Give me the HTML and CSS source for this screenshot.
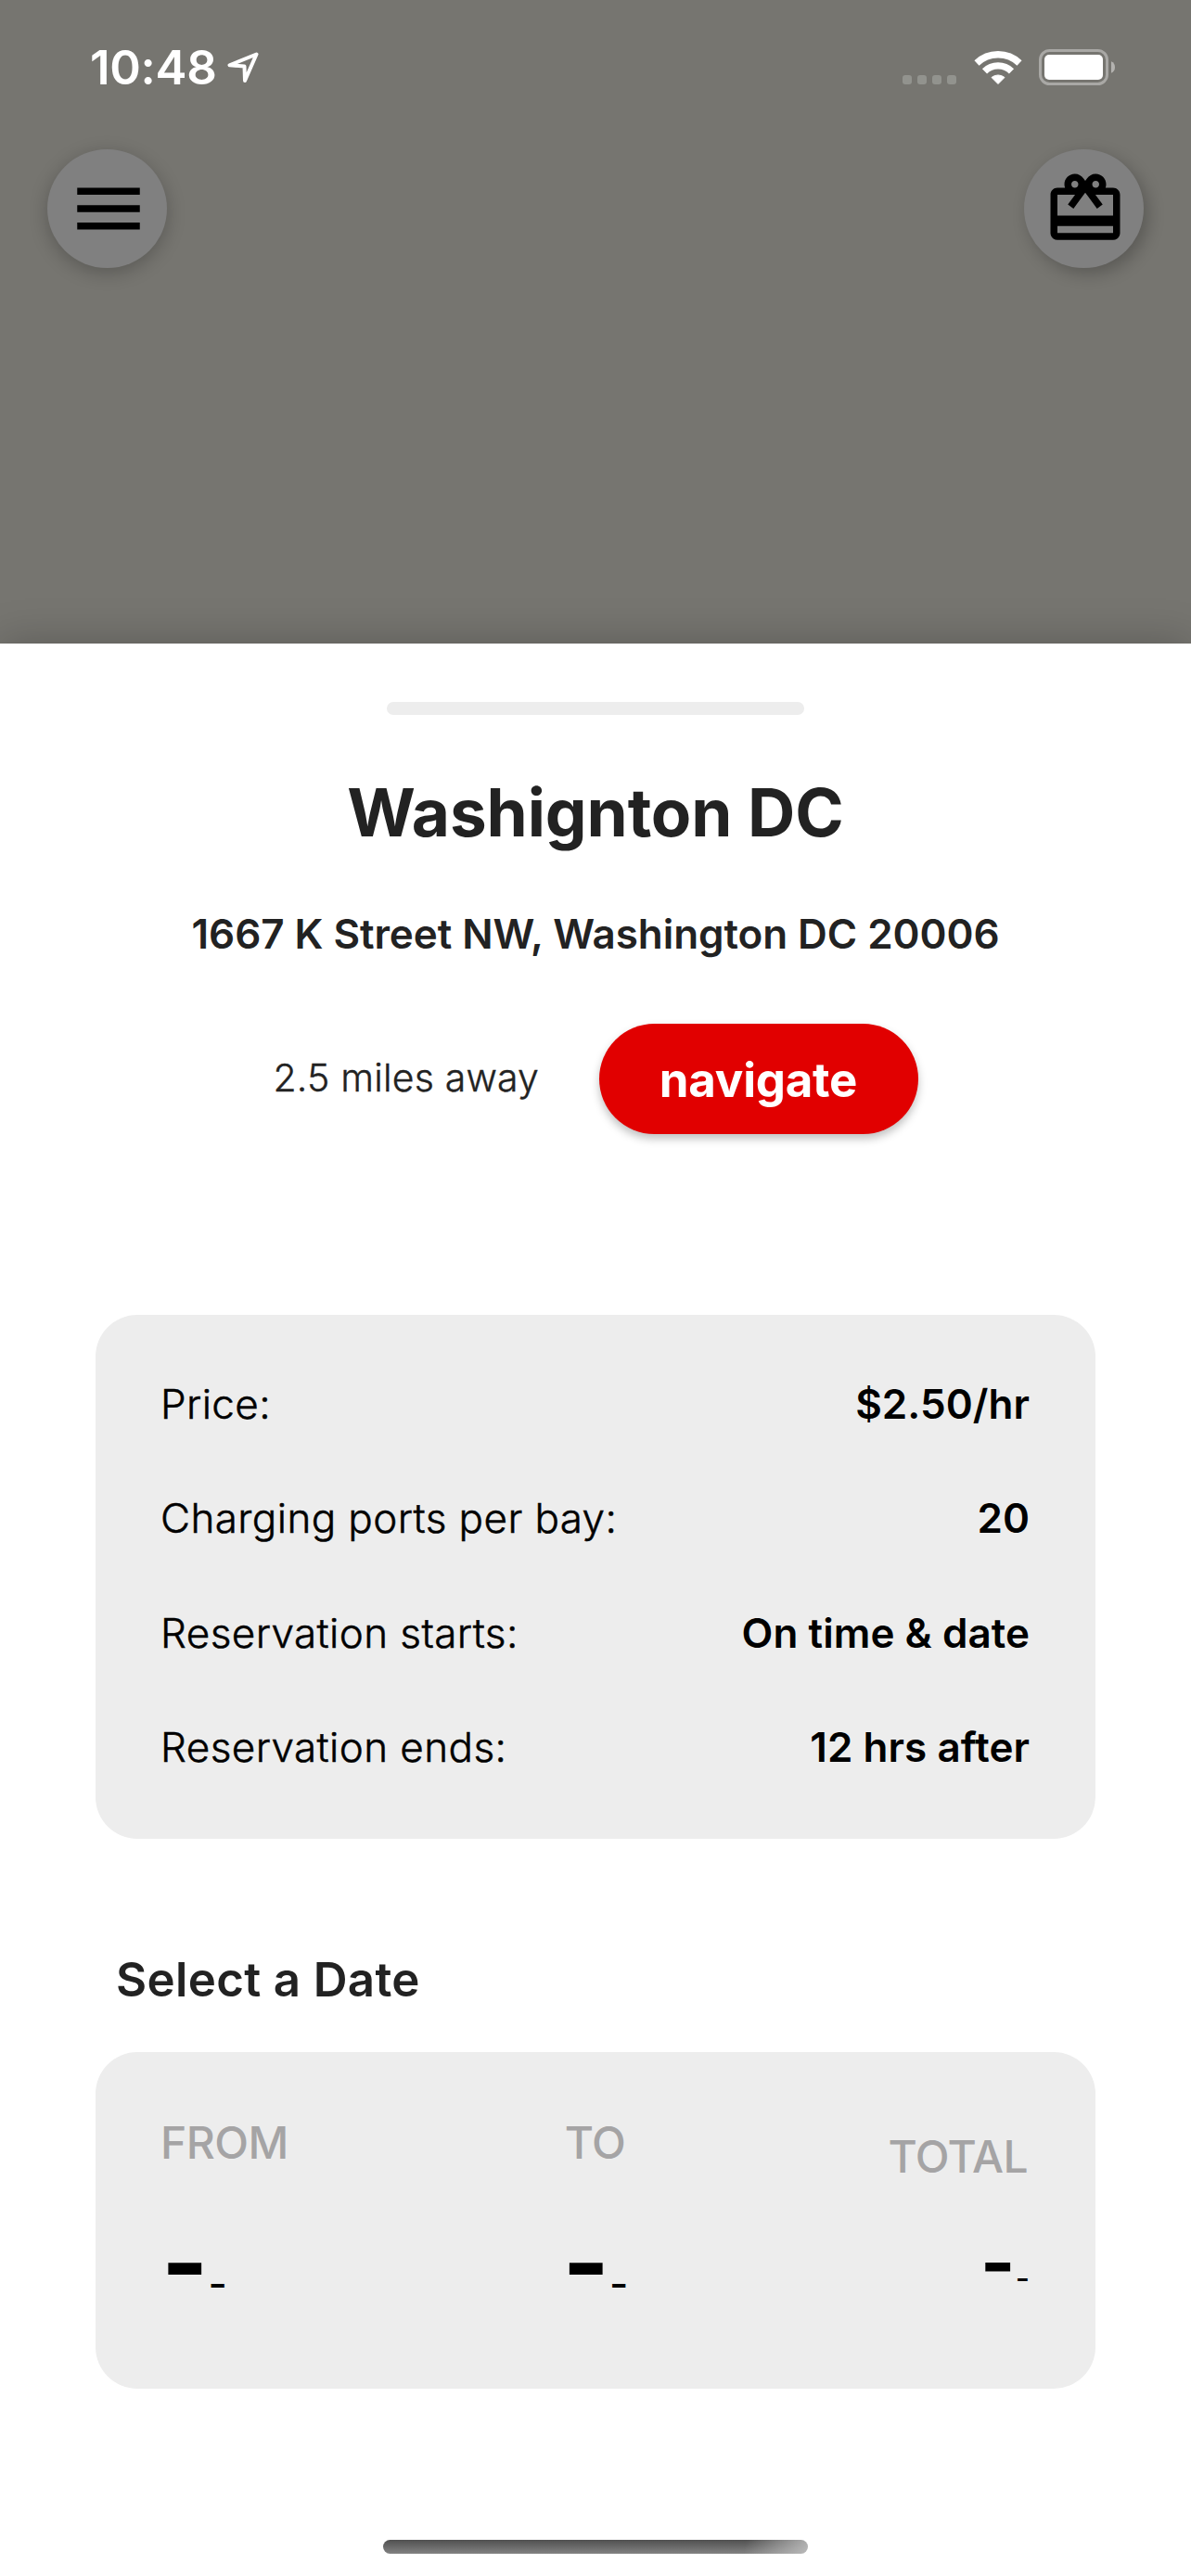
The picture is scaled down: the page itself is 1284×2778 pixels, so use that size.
FILE: index.html
```html
<!DOCTYPE html>
<html lang="en">
<head>
<meta charset="utf-8">
<title>Charging station</title>
<link rel="stylesheet" href="styles.css">
</head>
<body>
<main class="screen">
  <header class="map">
    <div class="status">
      <div class="status-left">
        <span class="clock">10:48</span>
        <svg class="location" viewBox="0 0 36 36" aria-hidden="true"><path d="M32.5 3.5 3.5 15.3 19.5 16.5 20 32Z" fill="none" stroke="#fff" stroke-width="4" stroke-linejoin="round"/></svg>
      </div>
      <div class="status-right">
        <div class="signal"><i></i><i></i><i></i><i></i></div>
        <svg class="wifi" viewBox="0 0 52 38" aria-hidden="true">
          <g fill="none" stroke="#fff" stroke-width="7.4"><path d="M3 14A33.3 33.3 0 0 1 49 14"/><path d="M11.5 22.8A20.8 20.8 0 0 1 40.5 22.8"/></g>
          <path d="M26 36.5 19 29.5A11 11 0 0 1 33 29.5Z" fill="#fff" stroke="#fff" stroke-linejoin="round"/>
        </svg>
        <svg class="battery" viewBox="0 0 82 39" aria-hidden="true">
          <rect x="1.5" y="1.5" width="72" height="36" rx="10" fill="none" stroke="#a9a8a5" stroke-width="3"/>
          <rect x="6" y="6" width="63" height="27" rx="5" fill="#fff"/>
          <path d="M78 13.3Q82 15 82 19.5T78 25.7Z" fill="#b4b3b0"/>
        </svg>
      </div>
    </div>
    <nav class="actions">
      <button class="fab" aria-label="Menu"><svg viewBox="0 0 24 24"><path d="M3 18h18v-2H3v2zm0-5h18v-2H3v2zm0-7v2h18V6H3z"/></svg></button>
      <button class="fab fab-gift" aria-label="Rewards"><svg viewBox="0 0 24 24"><path d="M20 6h-2.18c.11-.31.18-.65.18-1 0-1.66-1.34-3-3-3-1.05 0-1.96.54-2.5 1.35l-.5.67-.5-.68C10.96 2.54 10.05 2 9 2 7.34 2 6 3.34 6 5c0 .35.07.69.18 1H4c-1.11 0-1.99.89-1.99 2L2 19c0 1.11.89 2 2 2h16c1.11 0 2-.89 2-2V8c0-1.11-.89-2-2-2zm-5-2c.55 0 1 .45 1 1s-.45 1-1 1-1-.45-1-1 .45-1 1-1zM9 4c.55 0 1 .45 1 1s-.45 1-1 1-1-.45-1-1 .45-1 1-1zm11 15H4v-2h16v2zm0-5H4V8h5.08L7 10.83 8.62 12 11 8.76l1-1.36 1 1.36L15.38 12 17 10.83 14.92 8H20v6z"/></svg></button>
    </nav>
  </header>
  <section class="sheet">
    <div class="handle"></div>
    <h1 class="title">Washignton DC</h1>
    <p class="address">1667 K Street NW, Washington DC 20006</p>
    <div class="distance-row">
      <span class="distance">2.5 miles away</span>
      <button class="navigate">navigate</button>
    </div>
    <dl class="card details">
      <div class="row"><dt>Price:</dt><dd>$2.50/hr</dd></div>
      <div class="row"><dt>Charging ports per bay:</dt><dd>20</dd></div>
      <div class="row"><dt>Reservation starts:</dt><dd>On time &amp; date</dd></div>
      <div class="row"><dt>Reservation ends:</dt><dd>12 hrs after</dd></div>
    </dl>
    <h2 class="subtitle">Select a Date</h2>
    <div class="card dates">
      <div class="col"><span class="label">FROM</span><span class="value">-<small>-</small></span></div>
      <div class="col col-mid"><span class="label">TO</span><span class="value">-<small>-</small></span></div>
      <div class="col col-total"><span class="label">TOTAL</span><span class="value">-<small>-</small></span></div>
    </div>
    <div class="home-indicator"></div>
  </section>
</main>
</body>
</html>
```
FILE: styles.css
```css
* { box-sizing: border-box; margin: 0; padding: 0; }

body {
  width: 1284px;
  background: #fff;
  font-family: "Inter", "Liberation Sans", sans-serif;
  color: #222;
}

button { border: 0; font: inherit; }

.screen {
  display: flex;
  flex-direction: column;
  width: 1284px;
  height: 2778px;
  overflow: hidden;
}

.map {
  height: 694px;
  padding-top: 42px;
  background: #767570;
}

.status {
  display: flex;
  justify-content: space-between;
  align-items: center;
  height: 61px;
  padding: 0 82px 0 97px;
}

.status-left, .status-right { display: flex; align-items: center; }
.status-left { gap: 10px; }

.clock {
  font-size: 51px;
  font-weight: 600;
  line-height: 61px;
  letter-spacing: -0.3px;
  color: #fff;
}

.location { width: 36px; height: 36px; }

.signal { display: flex; gap: 6px; margin: 27px 19px 0 0; }
.signal i { width: 10px; height: 10px; border-radius: 3px; background: #92938e; }
.wifi { width: 52px; height: 38px; margin-right: 18px; }
.battery { width: 82px; height: 39px; }

.actions {
  display: flex;
  justify-content: space-between;
  padding: 58px 51px 0;
}

.fab {
  display: flex;
  align-items: center;
  justify-content: center;
  width: 129px;
  height: 128px;
  padding-left: 3px;
  border-radius: 50%;
  background: #808080;
  box-shadow: 0 5px 20px rgba(0, 0, 0, 0.24);
}
.fab-gift { box-shadow: 5px 6px 18px rgba(0, 0, 0, 0.24); }
.fab svg { width: 90px; height: 90px; }

.sheet {
  display: flex;
  flex: 1;
  flex-direction: column;
  align-items: center;
  padding-top: 63px;
  background: #fff;
  box-shadow: 0 0 45px rgba(0, 0, 0, 0.23);
}

.handle {
  width: 450px;
  height: 14px;
  border-radius: 7px;
  background: #ededed;
}

.title {
  margin-top: 61px;
  font-size: 71px;
  font-weight: 700;
  line-height: 88px;
  letter-spacing: -0.1px;
}

.address {
  margin-top: 60px;
  font-size: 44px;
  font-weight: 600;
  line-height: 54px;
  letter-spacing: -0.07px;
}

.distance-row {
  display: flex;
  align-items: center;
  gap: 65px;
  margin-top: 70px;
}

.distance {
  width: 286px;
  padding-bottom: 3px;
  font-size: 41px;
  font-weight: 300;
  line-height: 50px;
  letter-spacing: 0.18px;
  white-space: nowrap;
  -webkit-text-stroke: 0.4px currentColor;
}

.navigate {
  width: 344px;
  height: 119px;
  padding-top: 1px;
  border-radius: 60px;
  background: #e10000;
  box-shadow: 0 5px 10px rgba(0, 0, 0, 0.25);
  color: #fff;
  font-size: 51px;
  font-weight: 700;
  letter-spacing: -0.25px;
}

.card {
  width: 1078px;
  border-radius: 45px;
  background: #ededed;
  color: #000;
}

.details {
  height: 565px;
  margin-top: 195px;
  padding: 34px 71px 0 70px;
}

.row {
  display: flex;
  align-items: center;
  justify-content: space-between;
  height: 123.5px;
  font-size: 44px;
  line-height: 54px;
}
.row dt {
  font-weight: 300;
  letter-spacing: 0.4px;
  -webkit-text-stroke: 0.5px currentColor;
}
.row dd { font-weight: 600; letter-spacing: 0.05px; }

.subtitle {
  align-self: flex-start;
  margin: 121px 0 0 125px;
  font-size: 51px;
  font-weight: 600;
  line-height: 62px;
  letter-spacing: 0.35px;
}

.dates {
  display: grid;
  grid-template-columns: 1fr 1fr 1fr;
  height: 363px;
  margin-top: 47px;
  padding: 69px 71px 0;
}

.col {
  display: flex;
  flex-direction: column;
  align-items: flex-start;
  gap: 35px;
}
.col-mid { align-items: center; }
.col-total { align-items: flex-end; gap: 36px; padding-top: 15px; }

.label {
  margin-left: -1px;
  font-size: 48px;
  font-weight: 500;
  line-height: 58px;
  letter-spacing: -0.6px;
  color: #a5a4a5;
}
.col-total .label { margin-right: 2px; }

.value { font-size: 108px; font-weight: 700; line-height: 130px; }
.value small { font-size: 44px; font-weight: 500; line-height: 0; }
.col-total .value { font-size: 81px; line-height: 98px; }
.col-total small { font-size: 33px; }

.home-indicator {
  width: 458px;
  height: 15px;
  margin-top: 163px;
  border-radius: 8px;
  background:
    linear-gradient(100deg, transparent 85%, rgba(200, 200, 200, 0.8) 100%),
    linear-gradient(#505050, #828282);
}
```
